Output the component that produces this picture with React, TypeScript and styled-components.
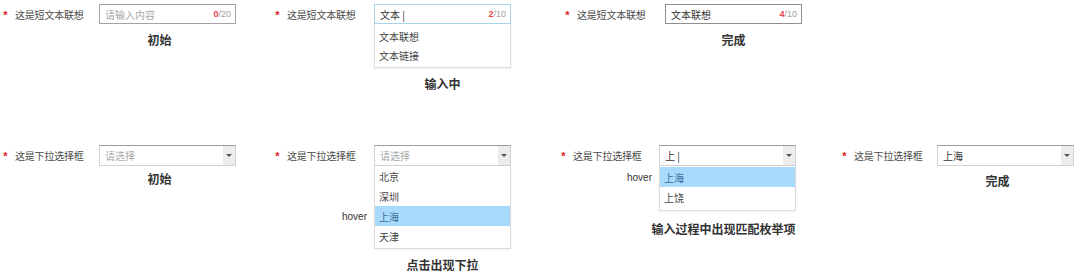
import React from 'react';
import styled, { createGlobalStyle } from 'styled-components';

const GlobalStyle = createGlobalStyle`
  html, body {
    margin: 0;
    padding: 0;
    background: #ffffff;
  }
  body {
    font-family: "Noto Sans CJK SC", "Liberation Sans", sans-serif;
    color: #333333;
  }
`;

// 한 줄에 들어가는 상태 예시들
const Page = styled.div`
  width: 1080px;
  height: 274px;
  display: flex;
  flex-direction: column;
  overflow: hidden;
`;

const Row = styled.div<{ $height: number; $top: number }>`
  display: flex;
  align-items: flex-start;
  height: ${(p) => p.$height}px;
  padding: ${(p) => p.$top}px 0 0 0;
  box-sizing: border-box;
`;

const Field = styled.div<{ $width?: number }>`
  display: flex;
  align-items: flex-start;
  flex: ${(p) => (p.$width ? `0 0 ${p.$width}px` : '1 1 auto')};
`;

const Head = styled.div<{ $width: number }>`
  display: flex;
  align-items: center;
  height: 20px;
  width: ${(p) => p.$width}px;
  flex: none;
`;

const Star = styled.span`
  color: #e0151b;
  font-family: "Liberation Sans", sans-serif;
  font-size: 11px;
  font-weight: bold;
  width: 11px;
  text-align: center;
  line-height: 1;
  padding-top: 3px;
`;

const Label = styled.span`
  font-size: 10px;
  color: #4a4a4a;
  margin-left: 4px;
  letter-spacing: -0.2px;
`;

const Column = styled.div`
  width: 137px;
  display: flex;
  flex-direction: column;
`;

// 입력창
const InputBox = styled.div<{ $focus?: boolean; $done?: boolean }>`
  height: 20px;
  box-sizing: border-box;
  border: 1px solid ${(p) => (p.$focus ? '#a9d3ec' : p.$done ? '#8f8f8f' : '#a3a3a3')};
  display: flex;
  align-items: center;
  padding: 0 4px 0 5px;
  background: #fff;
`;

const Value = styled.span<{ $placeholder?: boolean }>`
  flex: 1;
  font-size: 10px;
  color: ${(p) => (p.$placeholder ? '#a8a8a8' : '#333333')};
  white-space: nowrap;
`;

const Counter = styled.span`
  font-family: "Liberation Sans", sans-serif;
  font-size: 9px;
  color: #a0a0a0;
  b {
    color: #e8414b;
    font-weight: bold;
  }
`;

// 선택창
const SelectBox = styled.div`
  height: 21px;
  box-sizing: border-box;
  border: 1px solid #d2d2d2;
  border-top-color: #9c9c9c;
  display: flex;
  align-items: stretch;
  background: #fff;
`;

const SelectText = styled.span<{ $placeholder?: boolean }>`
  flex: 1;
  display: flex;
  align-items: center;
  padding-left: 5px;
  font-size: 10px;
  color: ${(p) => (p.$placeholder ? '#a8a8a8' : '#333333')};
`;

const Arrow = styled.span`
  width: 12px;
  background: #ececec;
  display: flex;
  align-items: center;
  justify-content: center;
  &::after {
    content: '';
    border-left: 3px solid transparent;
    border-right: 3px solid transparent;
    border-top: 3px solid #555555;
  }
`;

// 드롭다운 목록
const Menu = styled.div<{ $pad: number }>`
  border: 1px solid #dcdcdc;
  border-top: none;
  padding: ${(p) => p.$pad}px 0 2px;
  box-shadow: 0 1px 2px rgba(0, 0, 0, 0.06);
  background: #fff;
`;

const Option = styled.div<{ $active?: boolean; $h: number }>`
  position: relative;
  height: ${(p) => p.$h}px;
  display: flex;
  align-items: center;
  padding-left: 4px;
  font-size: 10px;
  color: ${(p) => (p.$active ? '#3b6f95' : '#444444')};
  background: ${(p) => (p.$active ? '#a8dafd' : 'transparent')};
`;

const Hover = styled.span`
  position: absolute;
  right: calc(100% + 8px);
  font-family: "Liberation Sans", sans-serif;
  font-size: 10px;
  color: #333333;
`;

const Caption = styled.div<{ $gap: number; $shift?: number }>`
  margin-top: ${(p) => p.$gap}px;
  margin-left: ${(p) => (p.$shift || 0) * 2}px;
  text-align: center;
  font-size: 12px;
  font-weight: bold;
  line-height: 14px;
  color: #333333;
  white-space: nowrap;
  width: 137px;
  display: flex;
  justify-content: center;
`;

const Title = ({ text, width }: { text: string; width: number }) => (
  <Head $width={width}>
    <Star>*</Star>
    <Label>{text}</Label>
  </Head>
);

const App = () => {
  return (
    <Page>
      <GlobalStyle />

      {/* 짧은 텍스트 연상 */}
      <Row $height={145} $top={4}>
        <Field $width={272}>
          <Title text="这是短文本联想" width={99} />
          <Column>
            <InputBox>
              <Value $placeholder>请输入内容</Value>
              <Counter><b>0</b>/20</Counter>
            </InputBox>
            <Caption $gap={9} $shift={-4}>初始</Caption>
          </Column>
        </Field>

        <Field $width={290}>
          <Title text="这是短文本联想" width={102} />
          <Column>
            <InputBox $focus>
              <Value>文本 |</Value>
              <Counter><b>2</b>/10</Counter>
            </InputBox>
            <Menu $pad={3}>
              <Option $h={19}>文本联想</Option>
              <Option $h={19}>文本链接</Option>
            </Menu>
            <Caption $gap={9}>输入中</Caption>
          </Column>
        </Field>

        <Field>
          <Title text="这是短文本联想" width={103} />
          <Column>
            <InputBox $done>
              <Value>文本联想</Value>
              <Counter><b>4</b>/10</Counter>
            </InputBox>
            <Caption $gap={9}>完成</Caption>
          </Column>
        </Field>
      </Row>

      {/* 드롭다운 선택 */}
      <Row $height={129} $top={0}>
        <Field $width={272}>
          <Title text="这是下拉选择框" width={99} />
          <Column>
            <SelectBox>
              <SelectText $placeholder>请选择</SelectText>
              <Arrow />
            </SelectBox>
            <Caption $gap={6} $shift={-4}>初始</Caption>
          </Column>
        </Field>

        <Field $width={286}>
          <Title text="这是下拉选择框" width={102} />
          <Column>
            <SelectBox>
              <SelectText $placeholder>请选择</SelectText>
              <Arrow />
            </SelectBox>
            <Menu $pad={0}>
              <Option $h={20}>北京</Option>
              <Option $h={20}>深圳</Option>
              <Option $h={20} $active>
                <Hover>hover</Hover>
                上海
              </Option>
              <Option $h={20}>天津</Option>
            </Menu>
            <Caption $gap={9}>点击出现下拉</Caption>
          </Column>
        </Field>

        <Field $width={281}>
          <Title text="这是下拉选择框" width={101} />
          <Column>
            <SelectBox>
              <SelectText>上 |</SelectText>
              <Arrow />
            </SelectBox>
            <Menu $pad={1}>
              <Option $h={20} $active>
                <Hover>hover</Hover>
                上海
              </Option>
              <Option $h={21}>上饶</Option>
            </Menu>
            <Caption $gap={11} $shift={-2}>输入过程中出现匹配枚举项</Caption>
          </Column>
        </Field>

        <Field>
          <Title text="这是下拉选择框" width={98} />
          <Column>
            <SelectBox>
              <SelectText>上海</SelectText>
              <Arrow />
            </SelectBox>
            <Caption $gap={8} $shift={-4}>完成</Caption>
          </Column>
        </Field>
      </Row>
    </Page>
  );
};

export default App;
